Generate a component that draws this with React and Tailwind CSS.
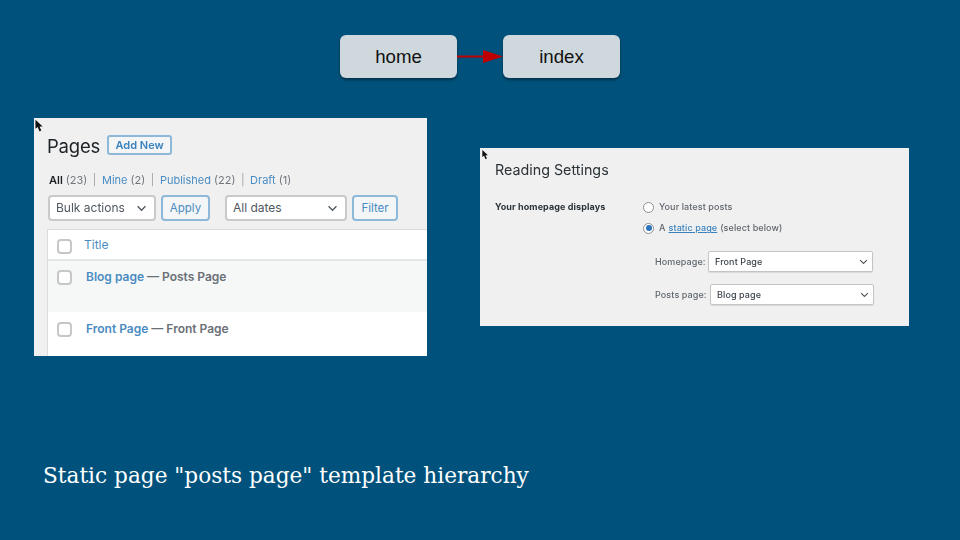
const inter = "font-['Inter','Liberation_Sans',sans-serif]";

function Chevron({ className }) {
  return (
    <svg viewBox="0 0 12 8" className={className} fill="none" stroke="#50575e" strokeWidth="1.5">
      <path d="M1.5 1.5 L6 6 L10.5 1.5" />
    </svg>
  );
}

function Cursor({ className }) {
  return (
    <svg viewBox="0 0 10 14" className={className}>
      <path d="M0.5 0 L0.5 10 L3 8 L5 13 L7 12 L5 7.5 L8.5 7.5 Z" fill="#111" />
    </svg>
  );
}

function NodeBox({ children }) {
  return (
    <div className="w-[117px] h-[43px] pt-[2px] rounded-[6px] bg-[#cfd8dc] shadow-[0_2px_3px_rgba(0,0,0,0.4)] flex items-center justify-center text-[18.7px] text-[#111] font-['Liberation_Sans',sans-serif]">
      {children}
    </div>
  );
}

function WpSelect({ w, label }) {
  return (
    <div className={`${w} h-[26px] shrink-0 bg-white border-2 border-[#c8c9cb] rounded-[4px] flex items-center justify-between pl-[6px] pr-[7px] text-[12px] text-[#50575e]`}>
      <span>{label}</span>
      <Chevron className="w-[11px] h-[7px]" />
    </div>
  );
}

function WpButton({ w, label }) {
  return (
    <div className={`${w} h-[26px] pt-[2px] shrink-0 bg-[#f3f5f6] border-2 border-[#8db8d8] rounded-[4px] flex items-center justify-center text-[11.5px] text-[#4a8cc2]`}>
      {label}
    </div>
  );
}

function Check() {
  return <div className="w-[15px] h-[15px] shrink-0 bg-white border-2 border-[#c6c7c9] rounded-[4px]" />;
}

function Sep() {
  return <span className="px-[2.5px] text-[#a0a5aa]">|</span>;
}

function PagesPanel() {
  return (
    <div className={`relative w-[393px] h-[238px] shrink-0 overflow-hidden bg-[#f0f0f1] ${inter}`}>
      <Cursor className="absolute left-[1px] top-[1px] w-[9px] h-[14px]" />
      <div className="blur-[0.5px] flex flex-col">
        <div className="flex items-center pl-[13px] pt-[17px] h-[37px]">
          <span className="text-[18.5px] leading-none text-[#1d2327] tracking-[-0.2px] pt-[2px]">Pages</span>
          <div className="ml-[7px] w-[65px] h-[20px] border-2 border-[#8db8d8] rounded-[3px] bg-[#f3f5f6] flex items-center justify-center text-[11px] font-semibold text-[#3b82bd]">
            Add New
          </div>
        </div>
        <div className="flex items-center gap-[3px] pl-[15px] mt-[17px] h-[16px] text-[11px] text-[#70767c]">
          <span className="font-semibold text-[#1d2327]">All</span>
          <span>(23)</span>
          <Sep />
          <span className="text-[#4a8cc2]">Mine</span>
          <span>(2)</span>
          <Sep />
          <span className="text-[#4a8cc2]">Published</span>
          <span>(22)</span>
          <Sep />
          <span className="text-[#4a8cc2]">Draft</span>
          <span>(1)</span>
        </div>
        <div className="flex items-center pl-[14px] mt-[7px]">
          <WpSelect w="w-[108px]" label="Bulk actions" />
          <div className="w-[5px] shrink-0" />
          <WpButton w="w-[49px]" label="Apply" />
          <div className="w-[15px] shrink-0" />
          <WpSelect w="w-[122px]" label="All dates" />
          <div className="w-[5px] shrink-0" />
          <WpButton w="w-[46px]" label="Filter" />
        </div>
        <div className="ml-[13px] mt-[8px] bg-white border-l border-t border-[#dcdcde]">
          <div className="h-[31px] flex items-center pl-[9px] pt-[4px] border-b-2 border-[#e4e5e6]">
            <Check />
            <span className="ml-[12px] -mt-[3px] text-[12px] text-[#4a8cc2]">Title</span>
          </div>
          <div className="h-[51px] bg-[#f6f7f7] flex items-start pl-[9px] pt-[9px]">
            <Check />
            <span className="ml-[14px] text-[12px] font-semibold text-[#4a8cc2] leading-[14px]">Blog page</span>
            <span className="ml-[3px] text-[12px] font-semibold text-[#6a7076] leading-[14px]">— Posts Page</span>
          </div>
          <div className="h-[44px] flex items-start pl-[9px] pt-[10px]">
            <Check />
            <span className="ml-[14px] text-[12px] font-semibold text-[#4a8cc2] leading-[14px]">Front Page</span>
            <span className="ml-[3px] text-[12px] font-semibold text-[#6a7076] leading-[14px]">— Front Page</span>
          </div>
        </div>
      </div>
    </div>
  );
}

function Radio({ on }) {
  return (
    <div className="w-[11px] h-[11px] shrink-0 rounded-full bg-white border border-[#8c8f94] flex items-center justify-center">
      {on && <div className="w-[6px] h-[6px] rounded-full bg-[#2c74bd]" />}
    </div>
  );
}

function ReadingPanel() {
  return (
    <div className={`relative w-[429px] h-[178px] shrink-0 mt-[30px] overflow-hidden bg-[#f0f0f1] ${inter}`}>
      <Cursor className="absolute left-[2px] top-[1px] w-[7px] h-[12px]" />
      <div className="blur-[0.4px] flex flex-col pl-[15px]">
        <div className="pt-[13px] text-[14.3px] leading-[18px] text-[#2c3338]">Reading Settings</div>
        <div className="flex mt-[21px]">
          <div className="w-[148px] shrink-0 text-[9px] font-bold leading-[14px] text-[#2c3338] tracking-[0.1px]">Your homepage displays</div>
          <div className="flex flex-col text-[9px] text-[#60666c] tracking-[0.1px] font-medium">
            <div className="flex items-center h-[14px]">
              <Radio />
              <span className="ml-[5px]">Your latest posts</span>
            </div>
            <div className="flex items-center h-[14px] mt-[7px]">
              <Radio on />
              <span className="ml-[5px]">A</span>
              <span className="ml-[3px] text-[#3b82bd] underline">static page</span>
              <span className="ml-[3px]">(select below)</span>
            </div>
            <div className="flex items-center mt-[16px] ml-[12px]">
              <span className="w-[53px] shrink-0">Homepage:</span>
              <div className="w-[165px] h-[21px] bg-white border border-[#c3c4c7] rounded-[2px] shadow-[0_1px_1px_rgba(0,0,0,0.1)] flex items-center justify-between pl-[6px] pr-[4px] text-[#3c434a]">
                <span>Front Page</span>
                <Chevron className="w-[9px] h-[6px]" />
              </div>
            </div>
            <div className="flex items-center mt-[12px] ml-[12px]">
              <span className="w-[55px] shrink-0">Posts page:</span>
              <div className="w-[164px] h-[21px] bg-white border border-[#c3c4c7] rounded-[2px] shadow-[0_1px_1px_rgba(0,0,0,0.1)] flex items-center justify-between pl-[6px] pr-[4px] text-[#3c434a]">
                <span>Blog page</span>
                <Chevron className="w-[9px] h-[6px]" />
              </div>
            </div>
          </div>
        </div>
      </div>
    </div>
  );
}

export default function App() {
  return (
    <div className="w-[960px] h-[540px] overflow-hidden bg-[#00527c] flex flex-col">
      <div className="relative flex justify-center gap-[46px] pt-[35px]">
        <NodeBox>home</NodeBox>
        <NodeBox>index</NodeBox>
        <svg viewBox="0 0 46 16" className="absolute left-[457px] top-[49px] w-[46px] h-[16px]">
          <path d="M0 7.5 H28" stroke="#c00000" strokeWidth="2" />
          <path d="M26 1 L46 7.5 L26 14 Z" fill="#c00000" />
        </svg>
      </div>
      <div className="flex items-start pl-[34px] gap-[53px] mt-[40px]">
        <PagesPanel />
        <ReadingPanel />
      </div>
      <div className="pl-[43px] mt-[105px] text-[21.65px] leading-[30px] text-white font-['DejaVu_Serif','Liberation_Serif',serif]">
        Static page "posts page" template hierarchy
      </div>
    </div>
  );
}
